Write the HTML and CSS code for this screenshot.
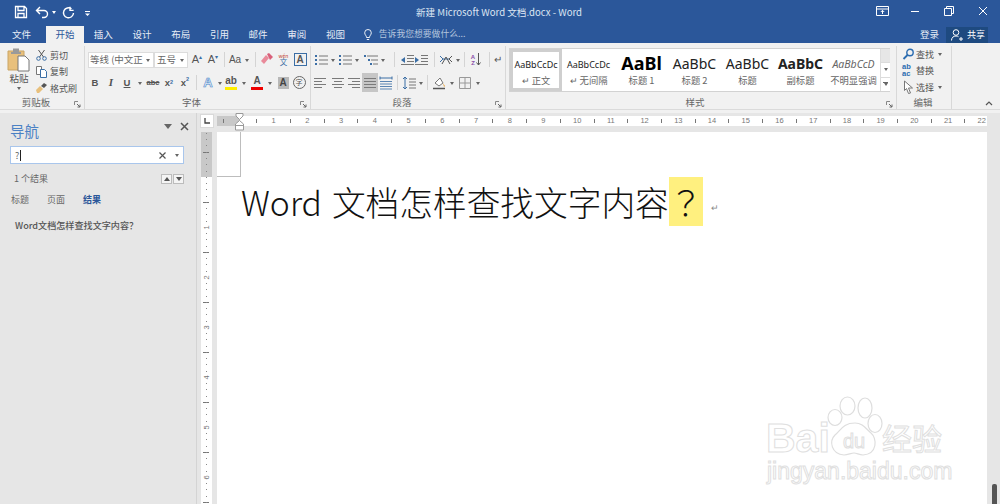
FILE: index.html
```html
<!DOCTYPE html>
<html lang="zh-CN">
<head>
<meta charset="utf-8">
<title>新建 Microsoft Word 文档.docx - Word</title>
<link rel="stylesheet" href="styles.css">
</head>
<body>
<svg class="defs" width="0" height="0">
  <symbol id="lines" viewBox="0 0 14 12"><path d="M1 1.500h12M1 4.500h12M1 7.500h12M1 10.500h12" stroke="#7a7a7a" fill="none"/></symbol>
  <symbol id="left" viewBox="0 0 14 12"><path d="M1 1.500h12M1 4.500h8M1 7.500h12M1 10.500h8" stroke="#7a7a7a" fill="none"/></symbol>
  <symbol id="center" viewBox="0 0 14 12"><path d="M1 1.500h12M3 4.500h8M1 7.500h12M3 10.500h8" stroke="#7a7a7a" fill="none"/></symbol>
  <symbol id="right" viewBox="0 0 14 12"><path d="M1 1.500h12M5 4.500h8M1 7.500h12M5 10.500h8" stroke="#7a7a7a" fill="none"/></symbol>
  <symbol id="launch" viewBox="0 0 7 7"><path d="M.5 4V.5H4" stroke="#888" fill="none"/><path d="M3 3l3 3M6 3.500V6H3.500" stroke="#666" fill="none"/></symbol>
</svg>

<header class="titlebar">
  <div class="qat">
    <svg class="q-save" width="14" height="14" viewBox="0 0 14 14"><path d="M1.500 1.500h9l2 2v9h-11z M4 1.500v4h6v-4 M4 12.500v-4h6v4" fill="none" stroke="#fff" stroke-width="1.300"/></svg>
    <svg class="q-undo" width="14" height="13" viewBox="0 0 14 13"><path d="M2 4.500h7a3.500 3.500 0 0 1 0 7H7M5 1L1.500 4.500 5 8" fill="none" stroke="#fff" stroke-width="1.400"/></svg>
    <i class="cr cr-w"></i>
    <svg class="q-redo" width="13" height="13" viewBox="0 0 13 13"><path d="M9.500 2.800A5 5 0 1 0 11.500 7M8 .8v3.600h3.600" fill="none" stroke="#fff" stroke-width="1.400"/></svg>
    <svg class="q-more" width="7" height="7" viewBox="0 0 7 7"><path d="M1 1.500h5" stroke="#fff"/><path d="M1 3.500h5L3.500 6z" fill="#fff"/></svg>
  </div>
  <div class="doc-title">新建 Microsoft Word 文档.docx - Word</div>
  <div class="winbtns">
    <svg class="win-opt" width="13" height="10" viewBox="0 0 13 10"><path d="M.5.500h12v9H.5z M.5 3h12" fill="none" stroke="#fff"/><path d="M6.500 8V4.500M4.800 6l1.700-1.700L8.200 6" fill="none" stroke="#fff"/></svg>
    <svg width="10" height="10" viewBox="0 0 10 10"><path d="M1 5.500h8" stroke="#fff"/></svg>
    <svg width="10" height="10" viewBox="0 0 10 10"><path d="M.5 2.500h7v7h-7z M2.500 2.500v-2h7v7h-2" fill="none" stroke="#fff"/></svg>
    <svg width="10" height="10" viewBox="0 0 10 10"><path d="M1 1l8 8M9 1l-8 8" stroke="#fff"/></svg>
  </div>
</header>

<nav class="tabs">
  <span class="tab">文件</span>
  <span class="tab tab-on">开始</span>
  <span class="tab">插入</span>
  <span class="tab">设计</span>
  <span class="tab">布局</span>
  <span class="tab">引用</span>
  <span class="tab">邮件</span>
  <span class="tab">审阅</span>
  <span class="tab">视图</span>
  <span class="tell">
    <svg width="8" height="12" viewBox="0 0 8 12"><path d="M2.500 8.500C2.500 6.500.7 6 .7 3.800a3.300 3.300 0 0 1 6.600 0C7.300 6 5.500 6.500 5.500 8.500zM2.800 10.500h2.400" fill="none" stroke="#fff" stroke-width=".9"/></svg>
    告诉我您想要做什么...
  </span>
  <span class="login">登录</span>
  <span class="share">
    <svg width="12" height="12" viewBox="0 0 12 12"><circle cx="5" cy="3.500" r="2.800" fill="none" stroke="#fff"/><path d="M.5 11.500c0-3 2-4.500 4.500-4.500 1 0 1.800.2 2.500.7M8 10h4M10 8v4" fill="none" stroke="#fff"/></svg>
    共享
  </span>
</nav>

<section class="ribbon">
  <div class="group g-clip">
    <div class="g-body clip-body">
      <div class="paste">
        <svg width="24" height="25" viewBox="0 0 24 25"><path d="M1 4h16v19H1z" fill="#e8c07c" stroke="#c9a465"/><path d="M6 1.500h6V5h2v2H4V5h2z" fill="#9a9a9a"/><path d="M11 9h7l4 4v11H11z" fill="#fff" stroke="#777"/></svg>
        <span class="paste-l">粘贴</span>
        <i class="cr"></i>
      </div>
      <div class="clip-list">
        <div class="clip-row"><svg width="12" height="12" viewBox="0 0 12 12"><path d="M3 1l5 7M9 1L4 8" stroke="#555" fill="none"/><circle cx="3" cy="9.500" r="1.800" fill="none" stroke="#3b6ea5"/><circle cx="9" cy="9.500" r="1.800" fill="none" stroke="#3b6ea5"/></svg>剪切</div>
        <div class="clip-row"><svg width="12" height="12" viewBox="0 0 12 12"><path d="M1 .5h5v8H1z" fill="#fff" stroke="#777"/><path d="M5 3.500h4l2 2v6H5z" fill="#fff" stroke="#3b6ea5"/></svg>复制</div>
        <div class="clip-row"><svg width="13" height="12" viewBox="0 0 13 12"><path d="M1 8l4-4 3 3-4 4H2z" fill="#e8c07c"/><path d="M6 4l3-3 3 2-3 3z" fill="#555"/></svg>格式刷</div>
      </div>
    </div>
    <div class="g-label"><span>剪贴板</span><svg class="launch" width="7" height="7"><use href="#launch"/></svg></div>
  </div>

  <div class="group g-font">
    <div class="g-body">
      <div class="row">
        <span class="sel sel-font">等线 (中文正<i class="cr"></i></span>
        <span class="sel sel-size">五号<i class="cr"></i></span>
        <span class="ic w16 gl-a">A<sup>▴</sup></span>
        <span class="ic w16 gl-a2">A<sup>▾</sup></span>
        <b class="sep"></b>
        <span class="ic w14 gl-aa">Aa</span><i class="cr"></i>
        <b class="sep"></b>
        <span class="ic w16"><svg width="14" height="13" viewBox="0 0 14 13"><path d="M1 8l5-6 3 3-5 6z" fill="#e98a9a"/><path d="M7 1l2-1 4 4-3 3z" fill="#d9607a"/></svg></span>
        <span class="ic w17 gl-wen"><small>wén</small><span>文</span></span>
        <span class="ic w16"><span class="boxa">A</span></span>
      </div>
      <div class="row row2">
        <span class="ic w16 gl-b">B</span>
        <span class="ic w16 gl-i">I</span>
        <span class="ic w16 gl-u">U</span><i class="cr"></i>
        <span class="ic w16 gl-abc">abc</span>
        <span class="ic w16 gl-x">x<sub>2</sub></span>
        <span class="ic w16 gl-x">x<sup>2</sup></span>
        <b class="sep"></b>
        <span class="ic w16 gl-ao">A</span><i class="cr cr-n"></i>
        <span class="ic w16 bar-y">ab</span><i class="cr"></i>
        <span class="ic w16 bar-r">A</span><i class="cr"></i>
        <span class="ic w16"><span class="shade">A</span></span>
        <span class="ic w16"><span class="circ">字</span></span>
      </div>
    </div>
    <div class="g-label"><span>字体</span><svg class="launch" width="7" height="7"><use href="#launch"/></svg></div>
  </div>

  <div class="group g-para">
    <div class="g-body">
      <div class="row">
        <span class="ic w14"><svg width="14" height="12" viewBox="0 0 14 12"><path d="M5 2h9M5 6h9M5 10h9" stroke="#777"/><path d="M1 1h2v2H1zM1 5h2v2H1zM1 9h2v2H1z" fill="#3b6ea5"/></svg></span><i class="cr"></i>
        <span class="ic w14"><svg width="14" height="12" viewBox="0 0 14 12"><path d="M5 2h9M5 6h9M5 10h9" stroke="#777"/><path d="M1 1h2v2H1zM1 5h2v2H1zM1 9h2v2H1z" fill="#3b6ea5"/></svg></span><i class="cr"></i>
        <span class="ic w14 ml2"><svg width="14" height="12" viewBox="0 0 14 12"><path d="M3 2h11M7 6h7M9 10h5" stroke="#777"/><path d="M0 1h2v2H0zM4 5h2v2H4zM6 9h2v2H6z" fill="#3b6ea5"/></svg></span><i class="cr"></i>
        <b class="sep ml4"></b>
        <span class="ic w14 ml2"><svg width="14" height="12" viewBox="0 0 14 12"><path d="M7 1.500h7M7 4.500h7M7 7.500h7M1 10.500h13" stroke="#777"/><path d="M5 3L1 6l4 3z" fill="#3b6ea5"/></svg></span>
        <span class="ic w14"><svg width="14" height="12" viewBox="0 0 14 12"><path d="M7 1.500h7M7 4.500h7M7 7.500h7M1 10.500h13" stroke="#777"/><path d="M1 3l4 3-4 3z" fill="#3b6ea5"/></svg></span>
        <b class="sep ml4"></b>
        <span class="ic w16"><svg width="14" height="12" viewBox="0 0 14 12"><path d="M1 2l3 3-3 3M4 5h6" fill="none" stroke="#3b6ea5"/><path d="M13 2l-3 3 3 3M3 10l4-7 4 7" fill="none" stroke="#555"/></svg></span><i class="cr cr-n"></i>
        <b class="sep"></b>
        <span class="ic w16 gl-sort"><span>A<br>Z</span><svg width="5" height="13" viewBox="0 0 5 13"><path d="M2.500 0v12M.5 9.500l2 2.500 2-2.500" fill="none" stroke="#555"/></svg></span>
        <b class="sep ml5 mr0"></b>
        <span class="ic w16 gl-pil">↵</span>
      </div>
      <div class="row row2 para2">
        <span class="ic w16"><svg width="14" height="12"><use href="#left"/></svg></span>
        <span class="ic w16 ml2"><svg width="14" height="12"><use href="#center"/></svg></span>
        <span class="ic w16"><svg width="14" height="12"><use href="#right"/></svg></span>
        <span class="ic w16 active"><svg width="14" height="12"><use href="#lines"/></svg></span>
        <span class="ic w16"><svg width="14" height="14" viewBox="0 0 14 14"><path d="M1 .5v3M13 .5v3M1 2h12" stroke="#3b6ea5" fill="none"/><path d="M1 5.500h12M1 8h12M1 10.500h12M1 13h12" stroke="#5b85b3"/></svg></span>
        <b class="sep"></b>
        <span class="ic w16"><svg width="14" height="14" viewBox="0 0 14 14"><path d="M3 1v12M1 3l2-2 2 2M1 11l2 2 2-2" fill="none" stroke="#3b6ea5"/><path d="M7 3h7M7 6h7M7 9h7M7 12h7" stroke="#777"/></svg></span><i class="cr cr-n"></i>
        <b class="sep"></b>
        <span class="ic w16"><svg width="14" height="14" viewBox="0 0 14 14"><path d="M3 7l5-5 3 5-4 3z" fill="#fff" stroke="#777"/><path d="M11 7l2 3-1 1z" fill="#e8a33d"/><path d="M1 12.500h12" stroke="#555" stroke-width="1.500"/></svg></span><i class="cr"></i>
        <span class="ic w16"><svg width="12" height="12" viewBox="0 0 12 12"><path d="M.5.500h11v11H.5zM6 .5v11M.5 6h11" fill="none" stroke="#999"/></svg></span><i class="cr"></i>
      </div>
    </div>
    <div class="g-label"><span>段落</span><svg class="launch" width="7" height="7"><use href="#launch"/></svg></div>
  </div>

  <div class="group g-styles">
    <div class="g-body">
      <div class="gallery">
        <div class="st st-on"><span class="pv pv-n">AaBbCcDc</span><span class="st-l">↵ 正文</span></div>
        <div class="st"><span class="pv pv-n">AaBbCcDc</span><span class="st-l">↵ 无间隔</span></div>
        <div class="st"><span class="pv pv-h1">AaBl</span><span class="st-l">标题 1</span></div>
        <div class="st"><span class="pv pv-h2">AaBbC</span><span class="st-l">标题 2</span></div>
        <div class="st"><span class="pv pv-h2">AaBbC</span><span class="st-l">标题</span></div>
        <div class="st"><span class="pv pv-sub">AaBbC</span><span class="st-l">副标题</span></div>
        <div class="st"><span class="pv pv-em">AaBbCcD</span><span class="st-l">不明显强调</span></div>
        <div class="gal-scroll">
          <span class="gs gs-off"></span>
          <span class="gs"><i class="cr"></i></span>
          <span class="gs gs-more"><i class="cr"></i></span>
        </div>
      </div>
    </div>
    <div class="g-label"><span>样式</span><svg class="launch" width="7" height="7"><use href="#launch"/></svg></div>
  </div>

  <div class="group g-edit">
    <div class="g-body edit-list">
      <div class="clip-row"><svg width="12" height="12" viewBox="0 0 12 12"><circle cx="7.500" cy="4.500" r="3.200" fill="none" stroke="#2b6cb0" stroke-width="1.400"/><path d="M5 7l-4 4" stroke="#2b6cb0" stroke-width="1.800"/></svg>查找<i class="cr"></i></div>
      <div class="clip-row"><span class="gl-rep">ab<br>ac</span>替换</div>
      <div class="clip-row"><svg width="12" height="14" viewBox="0 0 12 14"><path d="M2 1l8 7H6l2 5-2 .5-2-5-2 2z" fill="#fff" stroke="#777"/></svg>选择<i class="cr"></i></div>
    </div>
    <div class="g-label g-label-c"><span>编辑</span></div>
  </div>

  <svg class="collapse" width="8" height="5" viewBox="0 0 8 5"><path d="M1 4l3-3 3 3" fill="none" stroke="#555" stroke-width="1.200"/></svg>
</section>

<main class="main">
  <aside class="navpane">
    <div class="nav-head"><span class="nav-title">导航</span>
      <span class="nav-tools"><i class="cr cr-big"></i><svg width="9" height="9" viewBox="0 0 9 9"><path d="M1 1l7 7M8 1L1 8" stroke="#555" stroke-width="1.500"/></svg></span>
    </div>
    <div class="search"><span class="s-text">?</span><span class="caret"></span>
      <svg class="s-x" width="7" height="7" viewBox="0 0 7 7"><path d="M.5.500l6 6M6.500.500l-6 6" stroke="#555" stroke-width="1.200"/></svg><i class="cr"></i></div>
    <div class="res-row"><span>1 个结果</span>
      <span class="steps"><span class="step"><i class="tri-u"></i></span><span class="step"><i class="tri-d"></i></span></span></div>
    <div class="nav-tabs"><span>标题</span><span>页面</span><span class="nt-on">结果</span></div>
    <div class="result">Word文档怎样查找文字内容？</div>
  </aside>

  <div class="vbar">
    <div class="corner"><svg width="6" height="6" viewBox="0 0 6 6"><path d="M1 0v5h5" fill="none" stroke="#444" stroke-width="1.300"/></svg></div>
    <div class="vruler">
      <span><em>1</em></span><span><em>2</em></span><span><em>3</em></span><span><em>4</em></span><span><em>5</em></span><span><em>6</em></span>
    </div>
  </div>

  <div class="workspace">
    <div class="hruler">
      <span class="t t0"></span><span class="t-gap"></span>
      <span class="t"></span><span class="n">1</span><span class="t"></span><span class="n">2</span><span class="t"></span><span class="n">3</span><span class="t"></span><span class="n">4</span><span class="t"></span><span class="n">5</span><span class="t"></span><span class="n">6</span><span class="t"></span><span class="n">7</span><span class="t"></span><span class="n">8</span><span class="t"></span><span class="n">9</span><span class="t"></span><span class="n">10</span><span class="t"></span><span class="n">11</span><span class="t"></span><span class="n">12</span><span class="t"></span><span class="n">13</span><span class="t"></span><span class="n">14</span><span class="t"></span><span class="n">15</span><span class="t"></span><span class="n">16</span><span class="t"></span><span class="n">17</span><span class="t"></span><span class="n">18</span><span class="t"></span><span class="n">19</span><span class="t"></span><span class="n">20</span><span class="t"></span><span class="n">21</span><span class="t"></span><span class="n">22</span>
      <svg class="indent" width="10" height="18" viewBox="0 0 10 18"><path d="M1 .5h7v2.500L4.500 6.500 1 3z" fill="#fff" stroke="#999"/><path d="M4.500 7.500L8.500 11v6h-8v-6z" fill="#fff" stroke="#999"/><path d="M.5 12.500h8" stroke="#999"/></svg>
    </div>
    <div class="page">
      <div class="margin-mark"></div>
      <h1 class="heading">Word 文档怎样查找文字内容<span class="hit">？</span><span class="pilcrow">↵</span></h1>
      <div class="watermark">
        <svg class="paw" width="60" height="62" viewBox="0 0 60 62"><g fill="#fff" stroke="#dedede" stroke-width="1.200"><ellipse cx="22.500" cy="11" rx="7.500" ry="9"/><ellipse cx="40" cy="13" rx="7" ry="10"/><ellipse cx="10" cy="22.500" rx="7" ry="8"/><ellipse cx="50" cy="28.500" rx="7" ry="9"/><path d="M30 28c8 0 11 6 16 10 6 5 7 21-8 22-4 0-6-2-9-2s-6 2-10 2c-13-1-15-14-9-20 6-5 8-12 20-12z"/></g></svg>
        <span class="wm-bai">Bai</span><span class="wm-du">du</span><span class="wm-jy">经验</span>
        <span class="wm-url">jingyan.baidu.com</span>
      </div>
    </div>
  </div>

  <div class="scrollbar"><span class="thumb"></span></div>
</main>
</body>
</html>
```

FILE: styles.css
```css
* { box-sizing: border-box; }
html, body { margin: 0; padding: 0; }
body {
  width: 1000px; height: 504px; overflow: hidden; background: #e6e6e6;
  font-family: "Noto Sans CJK SC", "Noto Sans", sans-serif; font-size: 9.500px; color: #555;
  line-height: 1;
}
.defs { position: absolute; }
i, b, em { font-style: normal; font-weight: normal; }
svg { display: block; flex: none; }

/* caret */
.cr { display: inline-flex; width: 10px; height: 6px; align-items: center; justify-content: center; flex: none; }
.cr::before { content: ""; border: 2.500px solid transparent; border-top: 3px solid #666; border-bottom: 0; }
.cr-w::before { border-top-color: #fff; }
.cr-n { width: 7px; }
.cr-big::before { border-width: 4px; border-top-width: 5px; border-bottom: 0; border-top-color: #666; }

/* title bar */
.titlebar { height: 26px; background: #2b579a; display: flex; align-items: center; position: relative; color: #fff; }
.qat { display: flex; align-items: center; width: 416px; padding-left: 14px; }
.q-save { margin-top: -2px; }
.q-undo { margin-left: 7px; margin-top: -2px; }
.q-redo { margin-left: 3px; margin-top: -2px; }
.q-more { margin-left: 9px; margin-top: 1px; }
.qat .cr { margin-top: -2px; }
.doc-title { width: 168px; font-size: 9.600px; color: #dde5f2; white-space: nowrap; margin-top: -1px; }
.winbtns { margin-left: auto; display: flex; align-items: center; gap: 24px; width: 123px; padding-right: 12px; margin-top: -4px; justify-content: flex-end; }
.win-opt { margin-right: -3px; }

/* tabs */
.tabs { height: 17px; background: #2b579a; display: flex; align-items: center; color: #e7edf6; font-size: 9.500px; padding-left: 2px; }
.tab { width: 38.700px; height: 17px; display: flex; align-items: center; justify-content: center; flex: none; }
.tab-on { background: #f1f1f1; color: #2b579a; width: 38px; margin-left: 5px; }
.tab:first-child { width: 39px; }
.tell { display: flex; align-items: center; gap: 7px; margin-left: 9px; color: #b4c5de; font-size: 8.800px; }
.login { margin-left: auto; color: #e7edf6; margin-right: -2px; }
.share { display: flex; align-items: center; gap: 4px; width: 42px; height: 16px; background: #1e4a80; color: #fff; margin-left: 9px; margin-right: 12px; padding-left: 5px; font-size: 9px; }

/* ribbon */
.ribbon { height: 67px; background: #f1f1f1; display: flex; border-bottom: 1px solid #dadada; position: relative; color: #555; }
.group { display: flex; flex-direction: column; height: 63px; margin-top: 3px; border-right: 1px solid #d8d8d8; flex: none; }
.g-body { height: 51px; flex: none; padding-top: 5px; }
.g-label { height: 12px; flex: none; display: flex; align-items: center; justify-content: center; position: relative; font-size: 9.500px; color: #666; padding-right: 12px; }
.g-label-c { padding-right: 2px; }
.launch { position: absolute; right: 3px; bottom: 1px; }
.g-clip { width: 85px; }
.g-font { width: 226px; }
.g-para { width: 195px; }
.g-styles { width: 391px; }
.g-edit { width: 55px; }
.row { display: flex; align-items: center; height: 17px; padding-left: 3px; }
.row2 { margin-top: 6px; padding-left: 2px; }
.ic { display: flex; align-items: center; justify-content: center; flex: none; height: 17px; font-family: "Liberation Sans", sans-serif; color: #555; }
.w14 { width: 14px; }
.w16 { width: 16px; }
.w17 { width: 17px; }
.ml2 { margin-left: 2px; }
.row .cr { margin-top: 1px; }
.sep { width: 1px; height: 15px; background: #d4d4d4; margin: 0 3px; flex: none; }
.ml4 { margin-left: 6px; }
.ml5 { margin-left: 5px; }
.mr0 { margin-right: 0; }
.sel { display: flex; align-items: center; justify-content: space-between; flex: none; height: 16px; background: #fff; border: 1px solid #dcdcdc; font-size: 9.500px; padding-left: 1px; white-space: nowrap; overflow: hidden; color: #666; }
.sel-font { width: 66px; }
.sel-size { width: 34px; padding-left: 2px; margin-right: 1px; }
.gl-a, .gl-a2 { font-size: 11px; }
.ic sup { font-size: 6px; color: #3b6ea5; margin-top: -6px; }
.gl-aa { font-size: 10px; }
.gl-wen { flex-direction: column; font-size: 7.500px; color: #3b6ea5; font-family: "Noto Sans CJK SC", sans-serif; line-height: 1; }
.gl-wen small { font-size: 5px; color: #c0392b; line-height: 1; }
.boxa { width: 13px; height: 13px; border: 1px solid #3b6ea5; display: flex; align-items: center; justify-content: center; font-size: 10px; font-weight: 700; }
.gl-b, .gl-i, .gl-u, .gl-x, .gl-abc { font-weight: 700; font-size: 9.500px; }
.gl-i { font-style: italic; font-family: "Liberation Serif", serif; font-size: 11px; }
.gl-u { text-decoration: underline; }
.gl-abc { font-size: 7.500px; text-decoration: line-through; }
.gl-x sub, .gl-x sup { font-size: 5.500px; color: #3b6ea5; }
.gl-ao { font-size: 13px; font-weight: 700; color: #e8f0fa; -webkit-text-stroke: .6px #4a86c8; }
.bar-y, .bar-r { flex-direction: column; font-size: 10px; font-weight: 700; }
.bar-y::after, .bar-r::after { content: ""; width: 12px; height: 3px; margin-top: 1px; background: #ffee00; }
.bar-r::after { background: #ee0000; }
.shade { width: 11px; height: 12px; background: #b8b8b8; display: flex; align-items: center; justify-content: center; font-size: 10px; font-weight: 700; color: #444; }
.circ { width: 13px; height: 13px; border: 1px solid #666; border-radius: 50%; display: flex; align-items: center; justify-content: center; font-size: 7px; font-family: "Noto Sans CJK SC", sans-serif; }

.clip-body { display: flex; padding-top: 1px; }
.paste { width: 35px; padding-left: 7px; display: flex; flex-direction: column; align-items: flex-start; }
.paste-l { margin-top: 2px; font-size: 9.500px; width: 24px; text-align: center; }
.paste .cr { margin: 2px 0 0 7px; }
.clip-list { display: flex; flex-direction: column; }
.clip-row { display: flex; align-items: center; height: 16.500px; gap: 2px; font-size: 9px; white-space: nowrap; color: #555; }
.clip-row svg { width: 13px; }

.para2 { padding-left: 1px; }
.gl-sort { gap: 1px; font-size: 6px; font-weight: 700; color: #8a4fa8; line-height: 1; text-align: center; }
.gl-pil { font-size: 10px; }
.active { background: #c6c6c6; height: 19px; }

/* styles */
.g-styles .g-body { padding-top: 2px; padding-left: 3px; }
.gallery { width: 381px; height: 44px; display: flex; background: #fff; border: 1px solid #d2d2d2; }
.st { width: 53px; display: flex; flex-direction: column; align-items: center; flex: none; overflow: hidden; font-family: "Noto Sans", sans-serif; }
.st-on { border: 3px solid #cfcfcf; width: 52px; }
.pv { height: 27px; display: flex; align-items: center; justify-content: center; color: #222; width: 100%; overflow: hidden; white-space: nowrap; flex: none; }
.st:not(.st-on) .pv { padding-top: 3px; }
.st-on .pv { height: 24px; }
.pv-n { font-size: 9px; }
.pv-h1 { font-size: 18px; font-weight: 700; color: #000; }
.st:not(.st-on) .pv-h1 { padding-top: 1px; }
.pv-h2 { font-size: 14px; }
.pv-sub { font-size: 14px; font-weight: 700; }
.pv-em { font-size: 10.500px; font-style: italic; color: #666; }
.st-l { font-size: 9.300px; color: #666; font-family: "Noto Sans CJK SC", sans-serif; white-space: nowrap; }
.gal-scroll { width: 10px; display: flex; flex-direction: column; flex: none; border-left: 1px solid #dcdcdc; height: 42px; }
.gs { flex: 1; display: flex; align-items: center; justify-content: center; background: #fff; border-bottom: 1px solid #dcdcdc; }
.gs-off { background: #e6e6e6; }
.gs-more { border-bottom: 0; position: relative; }
.gs-more::before { content: ""; position: absolute; top: 4px; left: 2px; width: 5px; height: 1px; background: #666; }
.gs .cr { width: 8px; }

/* edit */
.edit-list { padding: 0 0 0 5px; display: flex; flex-direction: column; }
.edit-list .clip-row { gap: 1px; }
.gl-rep { font-size: 7.500px; line-height: .85; font-weight: 700; color: #2b6cb0; width: 13px; font-family: "Liberation Sans", sans-serif; }
.collapse { position: absolute; right: 7px; bottom: 3px; }

/* main */
.main { height: 394px; display: flex; padding-top: 3px; background: #f1f1f1; }
.navpane { width: 197px; flex: none; background: #e6e6e6; padding: 0 14px 0 10px; border-right: 1px solid #d4d4d4; font-size: 9px; }
.nav-head { height: 33px; display: flex; align-items: center; justify-content: space-between; }
.nav-title { font-size: 14.500px; color: #4b81c4; margin-top: 3px; }
.nav-tools { display: flex; align-items: center; gap: 7px; margin-top: -7px; margin-right: -7px; }
.search { width: 174px; height: 18px; background: #fff; border: 1px solid #a9c6ec; display: flex; align-items: center; padding: 0 1px 0 4px; }
.s-text { font-size: 9px; color: #666; }
.caret { width: 1px; height: 11px; background: #222; margin-left: 1px; }
.s-x { margin-left: auto; margin-right: 6px; }
.res-row { width: 174px; display: flex; justify-content: space-between; align-items: center; margin-top: 9px; height: 11px; padding-left: 4px; color: #666; }
.steps { display: flex; gap: 1px; }
.step { width: 11px; height: 10px; border: 1px solid #bcbcbc; background: #f4f4f4; display: flex; align-items: center; justify-content: center; }
.tri-u { border: 3px solid transparent; border-bottom: 4px solid #555; border-top: 0; }
.tri-d { border: 3px solid transparent; border-top: 4px solid #555; border-bottom: 0; }
.nav-tabs { display: flex; gap: 18px; margin-top: 9px; padding-left: 1px; height: 12px; align-items: center; color: #666; }
.nt-on { color: #2b579a; font-weight: 700; }
.result { margin-top: 16px; padding-left: 5px; color: #555; font-weight: 500; font-size: 9.100px; white-space: nowrap; }

.vbar { width: 20px; flex: none; background: #e6e6e6; padding-left: 3px; display: flex; flex-direction: column; }
.corner { width: 14px; height: 14px; margin-top: 1px; background: #fff; border: 1px solid #d9d9d9; display: flex; align-items: center; justify-content: center; }
.vruler {
  width: 11px; margin: 4px 0 0 1px; height: 372px; display: flex; flex-direction: column; padding-top: 70px;
  background:
    repeating-linear-gradient(to bottom, #888 0 1px, transparent 1px 6.250px) 5px 1px / 1px 100% no-repeat,
    repeating-linear-gradient(to bottom, #777 0 1px, transparent 1px 50px) 2px 20px / 6px 100% no-repeat,
    linear-gradient(#c8c8c8, #c8c8c8) 0 0 / 100% 45px no-repeat,
    #fff;
}
.vruler span { height: 50px; flex: none; display: flex; align-items: center; justify-content: center; }
.vruler em { width: 9px; height: 9px; display: flex; align-items: center; justify-content: center; background: #fff; transform: rotate(-90deg); font-size: 7.500px; color: #777; font-family: "Liberation Sans", sans-serif; }

.workspace { width: 770px; flex: none; display: flex; flex-direction: column; background: #e6e6e6; }
.hruler {
  height: 10px; margin-top: 3px; margin-bottom: 6px; display: flex; align-items: center; position: relative; flex: none; width: 770px;
  background: linear-gradient(to right, #c8c8c8 0 23px, #fff 23px);
  font-family: "Liberation Sans", sans-serif;
}
.t { width: 16.865px; flex: none; display: flex; justify-content: center; }
.t::before { content: ""; width: 1px; height: 4px; background: #777; }
.t0 { width: 13px; }
.t-gap { width: 18.400px; flex: none; }
.n { width: 16.865px; flex: none; text-align: center; font-size: 7.500px; color: #777; }
.indent { position: absolute; left: 18px; top: -3px; }

.page { flex: 1; background: #fff; position: relative; }
.margin-mark { width: 24px; height: 45px; border-right: 1px solid #bdbdbd; border-bottom: 1px solid #bdbdbd; }
.heading { margin: 0 0 0 24px; height: 49px; display: flex; align-items: center; font-size: 33.700px; font-weight: 300; color: #111; white-space: pre; word-spacing: 2.500px; }
.hit { width: 34px; height: 49px; background: #fff07f; display: flex; align-items: center; justify-content: center; font-family: "Noto Sans CJK TC", sans-serif; }
.pilcrow { font-size: 9px; color: #888; margin: 14px 0 0 8px; font-family: "DejaVu Sans", sans-serif; }

.watermark { position: absolute; left: 0; top: 0; width: 0; height: 0; }
.watermark span { position: absolute; color: #fff; -webkit-text-stroke: 1px #e0e0e0; white-space: nowrap; font-family: "Liberation Sans", sans-serif; }
.paw { position: absolute; left: 608px; top: 263px; }
.wm-bai { left: 549px; top: 286px; font-size: 41px; font-weight: 700; }
.wm-du { left: 626px; top: 299px; font-size: 20px; }
.wm-jy { left: 665px; top: 290px; font-size: 30px; font-family: "Noto Sans CJK SC", sans-serif !important; }
.wm-url { left: 550px; top: 328px; font-size: 23px; }

.scrollbar { width: 13px; flex: none; background: #e6e6e6; position: relative; }
.thumb { position: absolute; left: 5px; bottom: 0; width: 5px; height: 20px; background: #555; border-radius: 2px 2px 0 0; }
```
